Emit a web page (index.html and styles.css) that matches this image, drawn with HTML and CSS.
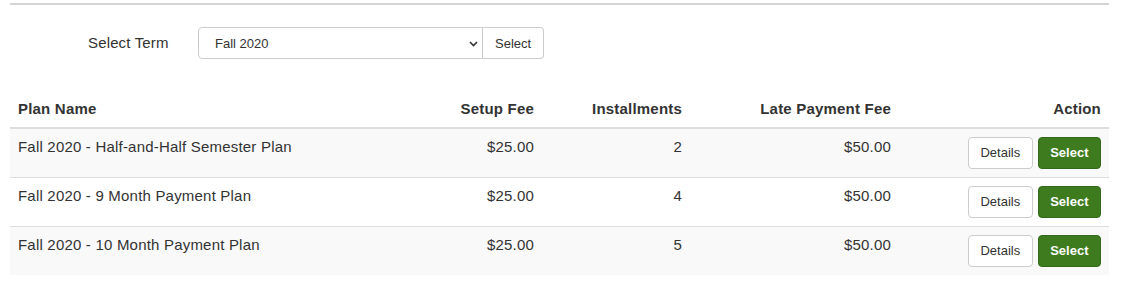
FILE: index.html
```html
<!DOCTYPE html>
<html lang="en">
<head>
<meta charset="utf-8">
<title>Payment Plans</title>
<link rel="stylesheet" href="styles.css">
</head>
<body>
<div class="page">
  <hr class="rule">
  <form class="term-form">
    <label class="term-label" for="term">Select Term</label>
    <div class="select-wrap">
      <select id="term" class="term-select">
        <option>Fall 2020</option>
      </select>
      <svg class="chevron" width="9" height="6" viewBox="0 0 9 6" aria-hidden="true"><path d="M1 1l3.5 3.5L8 1" fill="none" stroke="#333" stroke-width="1.6"/></svg>
    </div>
    <button type="button" class="term-btn">Select</button>
  </form>
  <table class="plans">
    <colgroup>
      <col class="c-name"><col class="c-setup"><col class="c-inst"><col class="c-late"><col class="c-action">
    </colgroup>
    <thead>
      <tr>
        <th>Plan Name</th>
        <th class="num">Setup Fee</th>
        <th class="num">Installments</th>
        <th class="num">Late Payment Fee</th>
        <th class="num">Action</th>
      </tr>
    </thead>
    <tbody>
      <tr>
        <td>Fall 2020 - Half-and-Half Semester Plan</td>
        <td class="num">$25.00</td>
        <td class="num">2</td>
        <td class="num">$50.00</td>
        <td class="num"><div class="actions"><button type="button" class="btn btn-default">Details</button><button type="button" class="btn btn-green">Select</button></div></td>
      </tr>
      <tr>
        <td>Fall 2020 - 9 Month Payment Plan</td>
        <td class="num">$25.00</td>
        <td class="num">4</td>
        <td class="num">$50.00</td>
        <td class="num"><div class="actions"><button type="button" class="btn btn-default">Details</button><button type="button" class="btn btn-green">Select</button></div></td>
      </tr>
      <tr>
        <td>Fall 2020 - 10 Month Payment Plan</td>
        <td class="num">$25.00</td>
        <td class="num">5</td>
        <td class="num">$50.00</td>
        <td class="num"><div class="actions"><button type="button" class="btn btn-default">Details</button><button type="button" class="btn btn-green">Select</button></div></td>
      </tr>
    </tbody>
  </table>
</div>
</body>
</html>
```

FILE: styles.css
```css
* { box-sizing: border-box; }

body {
  margin: 0;
  background: #fff;
  color: #333;
  font-family: "Liberation Sans", Arial, Helvetica, sans-serif;
}

.page {
  padding: 3px 21px 0 10px;
}

.rule {
  margin: 0;
  height: 0;
  border: 0;
  border-top: 2px solid #d4d4d4;
}

.term-form {
  display: flex;
  align-items: center;
  margin-top: 22px;
  padding-left: 78px;
  height: 32px;
}

.term-label {
  width: 110px;
  font-size: 15px;
  line-height: 20px;
  letter-spacing: 0.15px;
  color: #333;
}

.select-wrap {
  position: relative;
  width: 285px;
  height: 32px;
}

.term-select {
  -webkit-appearance: none;
  appearance: none;
  width: 100%;
  height: 32px;
  margin: 0;
  padding: 0 24px 0 16px;
  border: 1px solid #ccc;
  border-radius: 4px 0 0 4px;
  background: #fff;
  color: #333;
  font-family: inherit;
  font-size: 13px;
  outline: none;
}

.chevron {
  position: absolute;
  right: 5px;
  top: 14px;
  pointer-events: none;
}

.term-btn {
  height: 32px;
  margin: 0;
  padding: 0 12px;
  border: 1px solid #ccc;
  border-left: 0;
  border-radius: 0 4px 4px 0;
  background: #fff;
  color: #333;
  font-family: inherit;
  font-size: 13px;
}

.plans {
  margin-top: 32px;
  width: 1099px;
  border-collapse: collapse;
  table-layout: fixed;
}

.c-name { width: 370px; }
.c-setup { width: 162px; }
.c-inst { width: 148px; }
.c-late { width: 209px; }
.c-action { width: 210px; }

.plans th {
  padding: 8px;
  line-height: 20px;
  font-size: 15px;
  font-weight: bold;
  letter-spacing: 0.2px;
  text-align: left;
  vertical-align: bottom;
  border-bottom: 2px solid #ddd;
}

.plans td {
  padding: 8px;
  line-height: 20px;
  font-size: 15px;
  letter-spacing: 0.2px;
  vertical-align: top;
  border-top: 1px solid #ddd;
}

.plans tbody tr:nth-child(odd) {
  background: #f9f9f9;
}

.plans .num {
  text-align: right;
}

.actions {
  display: flex;
  justify-content: flex-end;
  gap: 5px;
}

.btn {
  height: 32px;
  margin: 0;
  padding: 6px 11.5px;
  line-height: 18px;
  font-family: inherit;
  font-size: 13px;
  letter-spacing: 0;
  border-radius: 4px;
  border: 1px solid #ccc;
}

.btn-default {
  background: #fff;
  color: #333;
}

.btn-green {
  background: #3e7b1e;
  border-color: #33691a;
  color: #fff;
  font-weight: bold;
}
```
